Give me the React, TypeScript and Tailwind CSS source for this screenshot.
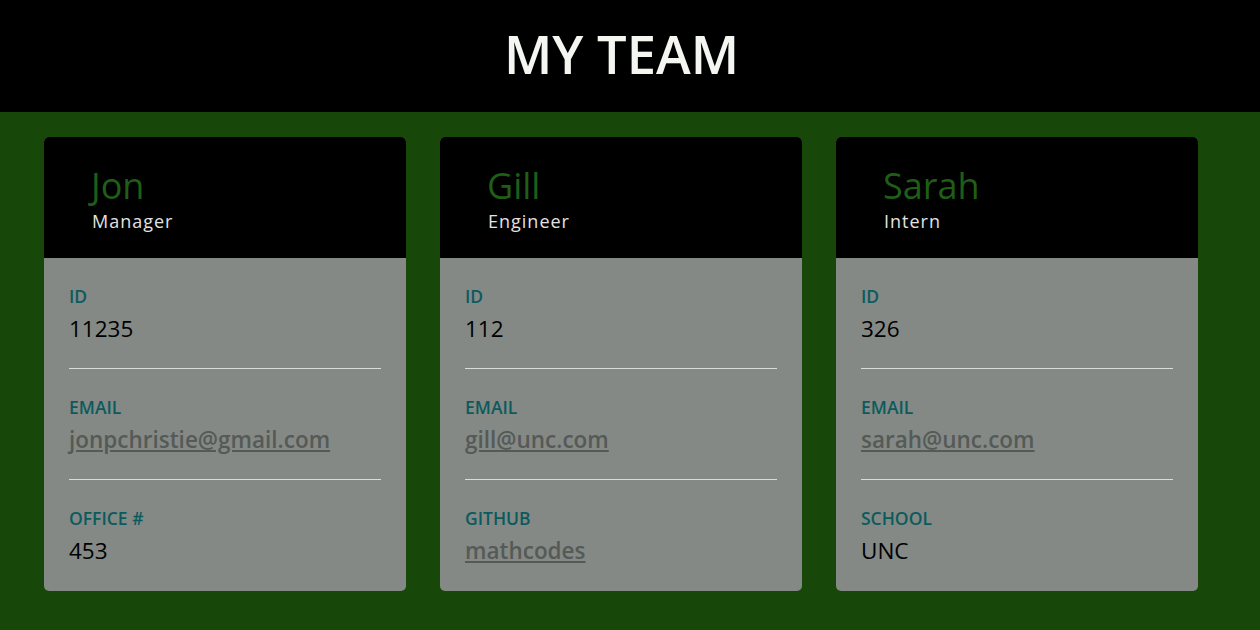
import React from "react";

type Row = { label: string; value: string; link?: boolean };
type Member = { name: string; role: string; rows: Row[] };

const team: Member[] = [
  {
    name: "Jon",
    role: "Manager",
    rows: [
      { label: "ID", value: "11235" },
      { label: "EMAIL", value: "jonpchristie@gmail.com", link: true },
      { label: "OFFICE #", value: "453" },
    ],
  },
  {
    name: "Gill",
    role: "Engineer",
    rows: [
      { label: "ID", value: "112" },
      { label: "EMAIL", value: "gill@unc.com", link: true },
      { label: "GITHUB", value: "mathcodes", link: true },
    ],
  },
  {
    name: "Sarah",
    role: "Intern",
    rows: [
      { label: "ID", value: "326" },
      { label: "EMAIL", value: "sarah@unc.com", link: true },
      { label: "SCHOOL", value: "UNC" },
    ],
  },
];

function Card({ m }: { m: Member }) {
  return (
    <div className="w-[362px] rounded-[5px] overflow-hidden bg-[#848986] flex flex-col">
      <div className="bg-black h-[121px] pl-[47px] pt-[26px]">
        <div className="text-[36px] leading-[46px] text-[#1f5e17]">{m.name}</div>
        <div className="text-[18px] leading-[24px] tracking-[1px] text-[#e2e2e2] pl-[1px]">{m.role}</div>
      </div>
      <div className="px-[25px] pt-[26px] pb-[24px] flex flex-col">
        {m.rows.map((r, i) => (
          <div key={r.label} className="flex flex-col">
            <div className="text-[17.5px] leading-[24px] mb-[5px] font-semibold text-[#0b5b5d]">{r.label}</div>
            <div className="text-[22.5px] leading-[32px]">
              {r.link ? (
                <a href="#" className="text-[#555a57] underline font-semibold">{r.value}</a>
              ) : (
                <span className="text-black">{r.value}</span>
              )}
            </div>
            {i < m.rows.length - 1 && <div className="h-px bg-[#dcdcdc] mt-[23px] mb-[26px]" />}
          </div>
        ))}
      </div>
    </div>
  );
}

export default function App() {
  return (
    <div className="min-h-[630px] bg-[#174809]" style={{ fontFamily: '"Open Sans", sans-serif' }}>
      <header className="bg-black h-[112px] w-full">
        <div className="w-[1243px] flex justify-center pt-[24px]">
          <h1 className="text-[52.5px] font-semibold text-[#f4f6f1] leading-[60px]">MY TEAM</h1>
        </div>
      </header>
      <div className="w-[1243px] flex gap-[34px] pl-[44px] pt-[25px] pb-[40px]">
        {team.map((m) => (
          <Card key={m.name} m={m} />
        ))}
      </div>
    </div>
  );
}
